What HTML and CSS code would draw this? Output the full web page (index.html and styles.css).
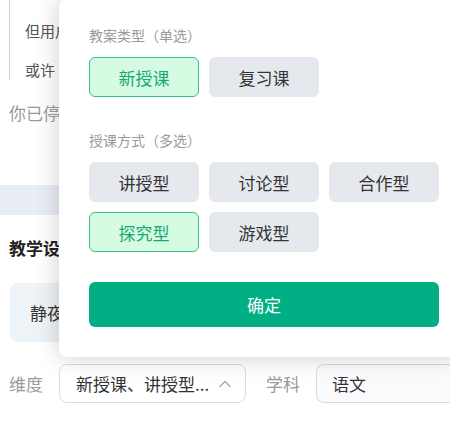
FILE: index.html
```html
<!DOCTYPE html>
<html lang="zh-CN">
<head>
    <meta charset="UTF-8">
    <meta name="viewport" content="width=device-width, initial-scale=1.0">
    <title>教学设计</title>
    <link rel="stylesheet" href="styles.css">
</head>
<body>
    <div class="page">
        <div class="quote">
            <p>能用户提供更多的信息</p>
            <p>但用户可能没有准备好</p>
            <p>或许 可以先给出一个示例</p>
        </div>
        <p class="notice">你已停止生成本次回答</p>
        <div class="band"></div>
        <div class="section-title">教学设计</div>
        <div class="poem-card">静夜思</div>

        <div class="form-row">
            <span class="field-label">维度</span>
            <div class="select-wrap">
                <div class="select">
                    <span class="select-text">新授课、讲授型...</span>
                    <svg class="chevron" width="12" height="8" viewBox="0 0 12 8">
                        <path d="M1 6.5 L6 1.5 L11 6.5" fill="none" stroke="#a3a5ab" stroke-width="1.3" stroke-linecap="round" stroke-linejoin="round"/>
                    </svg>
                </div>

                <!-- 下拉面板 -->
                <div class="dropdown">
                    <div class="group">
                        <div class="group-title">教案类型（单选）</div>
                        <div class="options">
                            <button class="option active">新授课</button>
                            <button class="option">复习课</button>
                        </div>
                    </div>
                    <div class="group">
                        <div class="group-title">授课方式（多选）</div>
                        <div class="options">
                            <button class="option">讲授型</button>
                            <button class="option">讨论型</button>
                            <button class="option">合作型</button>
                            <button class="option active">探究型</button>
                            <button class="option">游戏型</button>
                        </div>
                    </div>
                    <button class="confirm">确定</button>
                </div>
            </div>
            <span class="field-label subject-label">学科</span>
            <div class="input">语文</div>
        </div>
    </div>
</body>
</html>
```

FILE: styles.css
```css
body {
    margin: 0;
    font-family: "Noto Sans CJK SC", "Noto Sans", sans-serif;
    color: #333;
    background-color: #fff;
    overflow: hidden;
}
.page {
    padding: 0 0 0 9px;
}
.quote {
    margin-top: -18px;
    border-left: 1px solid #cfd1d6;
    padding-left: 15px;
}
.quote p {
    margin: 0 0 19px;
    font-size: 15px;
    line-height: 20px;
    color: #555;
    white-space: pre;
}
.quote p:last-child {
    margin-bottom: 0;
}
.notice {
    margin: 21px 0 0;
    font-size: 17px;
    line-height: 24px;
    color: #9a9a9a;
}
.band {
    margin: 60px 0 0 -9px;
    height: 30px;
    background-color: #e9edf5;
}
.section-title {
    margin-top: 21px;
    font-size: 17px;
    line-height: 24px;
    font-weight: bold;
    color: #222;
}
.poem-card {
    margin: 23px 9px 0 1px;
    height: 59px;
    line-height: 59px;
    padding-left: 20px;
    font-size: 17px;
    color: #333;
    background-color: #edf3f6;
    border-radius: 8px;
}
.form-row {
    margin-top: 22px;
    display: flex;
    align-items: center;
}
.field-label {
    font-size: 17px;
    color: #9a9a9a;
    margin-right: 16px;
    white-space: nowrap;
}
.subject-label {
    margin-left: 20px;
}
.select-wrap {
    position: relative;
}
.select {
    width: 187px;
    height: 39px;
    box-sizing: border-box;
    border: 1px solid #d9dbe3;
    border-radius: 8px;
    padding: 0 14px 0 16px;
    display: flex;
    align-items: center;
    justify-content: space-between;
    font-size: 17px;
    background-color: #fff;
}
.select-text {
    white-space: nowrap;
}
.input {
    flex: 1;
    height: 39px;
    box-sizing: border-box;
    border: 1px solid #d9dbe3;
    border-right: none;
    border-radius: 8px 0 0 8px;
    padding-left: 15px;
    line-height: 37px;
    font-size: 17px;
    background-color: #fbfbfd;
}
.dropdown {
    position: absolute;
    left: 0;
    bottom: calc(100% + 7px);
    width: 410px;
    box-sizing: border-box;
    padding: 26px 30px 30px;
    background-color: #fff;
    border-radius: 8px;
    box-shadow: 0 0 24px rgba(0, 0, 0, 0.2);
    z-index: 10;
}
.group + .group {
    margin-top: 33px;
}
.group-title {
    font-size: 14px;
    line-height: 20px;
    color: #9a9a9a;
    margin-bottom: 12px;
}
.options {
    display: grid;
    grid-template-columns: repeat(3, 110px);
    gap: 10px;
}
.option {
    height: 40px;
    border: 1px solid #e5e9ee;
    border-radius: 6px;
    background-color: #e5e9ee;
    font-family: inherit;
    font-size: 17px;
    color: #333;
    padding: 0;
    cursor: pointer;
}
.option.active {
    background-color: #d6fbe3;
    border-color: #3dbc8e;
    color: #17a874;
}
.confirm {
    display: block;
    margin-top: 30px;
    width: 350px;
    height: 45px;
    border: none;
    border-radius: 6px;
    background-color: #00b084;
    color: #fff;
    font-family: inherit;
    font-size: 17px;
    cursor: pointer;
}
```
